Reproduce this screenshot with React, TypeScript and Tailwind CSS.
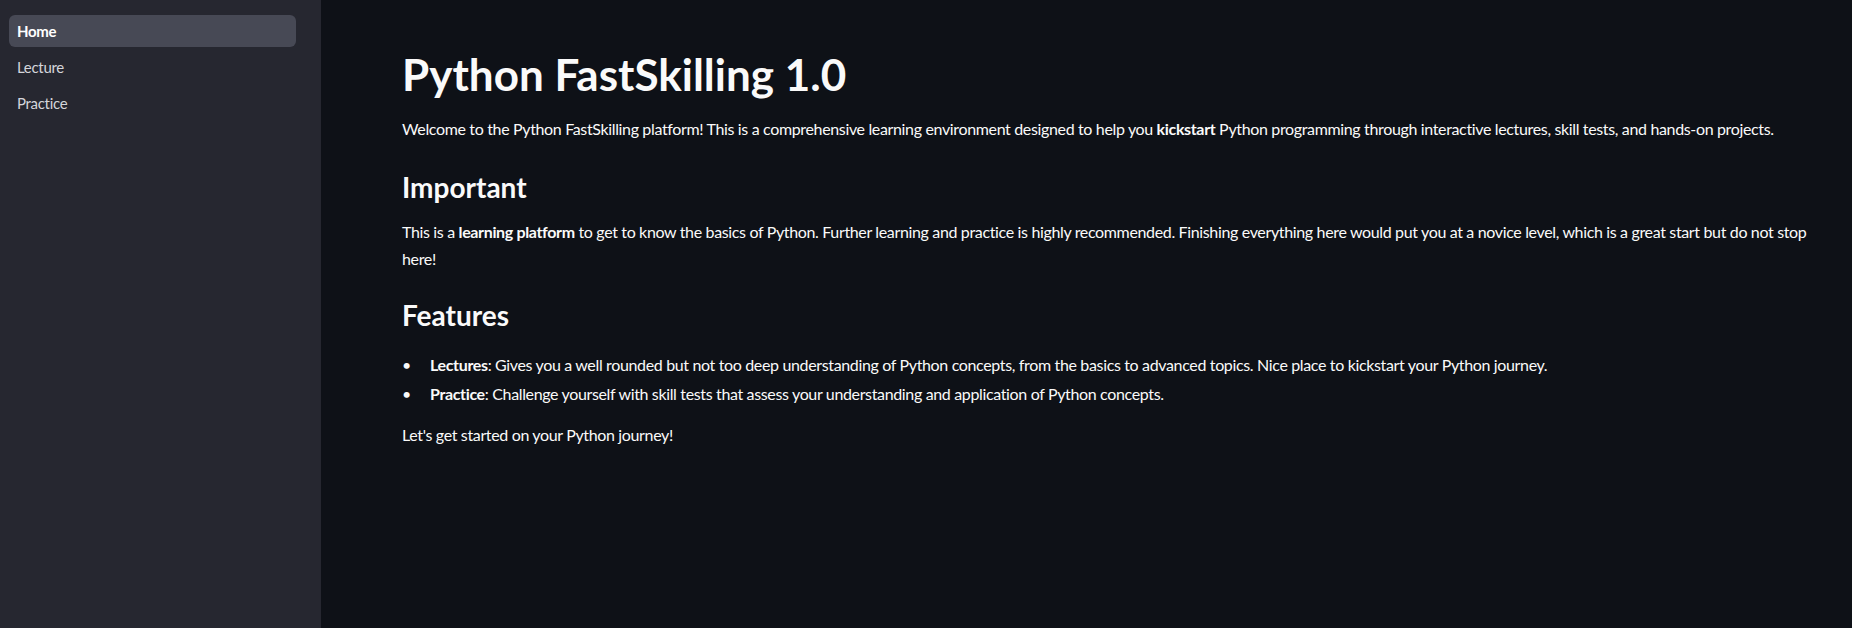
import React from 'react';

const navItems = ['Home', 'Lecture', 'Practice'];

const Sidebar: React.FC<{ active: string }> = ({ active }) => (
    <aside className="w-[321px] shrink-0 bg-[#262730] pl-[9px] pr-[25px] pt-[15px]">
        <nav className="flex flex-col gap-[4px]">
            {navItems.map(item => (
                <a
                    key={item}
                    href="#"
                    className={`h-[32px] flex items-center px-[8px] rounded-[6px] text-[15px] tracking-[-0.3px] ${
                        item === active ? 'bg-[#474955] text-white font-bold' : 'text-[#d4d5db]'
                    }`}
                >
                    {item}
                </a>
            ))}
        </nav>
    </aside>
);

const Bullet: React.FC<{ label: string; children: React.ReactNode }> = ({ label, children }) => (
    <li className="flex">
        <span className="w-[28px] shrink-0">•</span>
        <span><strong>{label}</strong>: {children}</span>
    </li>
);

export default function App() {
    return (
        <div
            className="flex min-h-[628px] w-full bg-[#0e1117] text-[#fafafa]"
            style={{ fontFamily: 'Lato, "Noto Sans", sans-serif' }}
        >
            <Sidebar active="Home" />

            <main className="flex-1 pl-[81px] pr-[37px] pt-[47px] tracking-[-0.35px]">
                <h1 className="text-[44px] font-bold leading-[54px] mb-[14px] tracking-normal">Python FastSkilling 1.0</h1>
                <p className="text-[16px] leading-[27px]">
                    Welcome to the Python FastSkilling platform! This is a comprehensive learning environment designed to help you <strong>kickstart</strong> Python programming through interactive lectures, skill tests, and hands-on projects.
                </p>

                <h3 className="text-[28px] font-bold leading-[40px] mt-[25px] mb-[11px] tracking-normal">Important</h3>
                <p className="text-[16px] leading-[27px]">
                    This is a <strong>learning platform</strong> to get to know the basics of Python. Further learning and practice is highly recommended. Finishing everything here would put you at a novice level, which is a great start but do not stop here!
                </p>

                <h3 className="text-[28px] font-bold leading-[40px] mt-[23px] mb-[16px] tracking-normal">Features</h3>
                <ul className="text-[16px] leading-[27px] flex flex-col gap-[2px]">
                    <Bullet label="Lectures">Gives you a well rounded but not too deep understanding of Python concepts, from the basics to advanced topics. Nice place to kickstart your Python journey.</Bullet>
                    <Bullet label="Practice">Challenge yourself with skill tests that assess your understanding and application of Python concepts.</Bullet>
                </ul>
                <p className="text-[16px] leading-[27px] mt-[14px]">Let's get started on your Python journey!</p>
            </main>
        </div>
    );
}
